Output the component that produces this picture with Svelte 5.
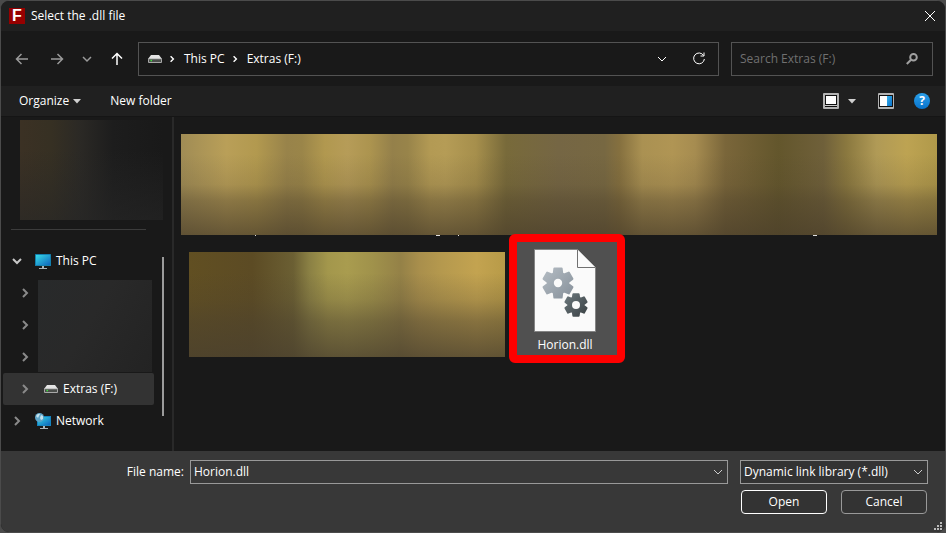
<script lang="ts">
	let fileName = $state('Horion.dll');
	let fileType = $state('dll');
	let query = $state('');

	const fileTypes = [{ value: 'dll', label: 'Dynamic link library (*.dll)' }];
	const crumbs = ['This PC', 'Extras (F:)'];
	const drives = ['Drive 1', 'Drive 2', 'Drive 3'];

	// outline of a six-toothed gear centred on 0,0
	function gear(outer: number, inner: number): string {
		const pts: string[] = [];
		for (let i = 0; i < 6; i++) {
			const a = i * 60 - 90;
			for (const [offset, r] of [[-24, inner], [-14, outer], [14, outer], [24, inner]]) {
				const t = ((a + offset) * Math.PI) / 180;
				pts.push(`${(r * Math.cos(t)).toFixed(2)},${(r * Math.sin(t)).toFixed(2)}`);
			}
		}
		return 'M' + pts.join('L') + 'Z';
	}
</script>

{#snippet drive()}
	<svg class="drive" width="14" height="8" viewBox="0 0 14 8" aria-hidden="true">
		<path d="M3 0h8l3 4H0z" fill="#e4e4e4" />
		<rect y="3.5" width="14" height="4.5" rx="1" fill="#a8a8a8" />
		<rect x="1" y="4.3" width="12" height="2.7" fill="#4a4d4a" />
		<rect x="2.5" y="4.8" width="1.5" height="1.5" fill="#3fe03f" />
	</svg>
{/snippet}

{#snippet chevron(dir: string)}
	<svg class="chevron {dir}" width="10" height="10" viewBox="0 0 10 10" aria-hidden="true">
		<path d="M3 1l4 4-4 4" />
	</svg>
{/snippet}

<div class="dialog" role="dialog" aria-labelledby="dialog-title">
	<header class="titlebar">
		<span class="logo" aria-hidden="true">F</span>
		<span id="dialog-title">Select the .dll file</span>
		<button class="close" aria-label="Close">
			<svg width="12" height="12" viewBox="0 0 12 12"><path d="M1 1l10 10M11 1L1 11" /></svg>
		</button>
	</header>

	<nav class="navbar">
		<div class="history">
			<button class="dim" aria-label="Back">
				<svg width="14" height="14" viewBox="0 0 14 14"><path d="M13 7H1.5M6.5 2l-5 5 5 5" /></svg>
			</button>
			<button class="dim" aria-label="Forward">
				<svg width="14" height="14" viewBox="0 0 14 14"><path d="M1 7h11.5M7.5 2l5 5-5 5" /></svg>
			</button>
			<button class="dim recent" aria-label="Recent locations">
				<svg width="10" height="10" viewBox="0 0 10 10"><path d="M1 3l4 4 4-4" /></svg>
			</button>
			<button aria-label="Up">
				<svg width="14" height="14" viewBox="0 0 14 14"><path d="M7 13V1.5M2 6.5l5-5 5 5" /></svg>
			</button>
		</div>
		<div class="address">
			{@render drive()}
			{#each crumbs as crumb}
				{@render chevron('crumb')}
				<a href="#top">{crumb}</a>
			{/each}
			<button class="drop" aria-label="Previous locations">
				<svg width="10" height="10" viewBox="0 0 10 10"><path d="M1 3l4 4 4-4" /></svg>
			</button>
			<button aria-label="Refresh">
				<svg width="14" height="14" viewBox="0 0 14 14"><path d="M11.6 3.5A5.4 5.4 0 1 0 12.4 7M12 .5v3.5H8.5" /></svg>
			</button>
		</div>
		<div class="search">
			<input type="text" placeholder="Search Extras (F:)" aria-label="Search Extras (F:)" bind:value={query} />
			<svg width="12" height="12" viewBox="0 0 12 12" aria-hidden="true"><circle cx="7.5" cy="4.3" r="3.3" /><path d="M5 6.8L.8 11" /></svg>
		</div>
	</nav>

	<div class="toolbar">
		<button class="organize">
			Organize
			<svg width="8" height="5" viewBox="0 0 8 5"><path d="M0 0h8L4 4.5z" /></svg>
		</button>
		<button>New folder</button>
		<div class="views">
			<button aria-label="Change view">
				<svg width="16" height="16" viewBox="0 0 16 16">
					<rect width="16" height="16" rx="1" fill="#b4b4b4" />
					<rect x="2" y="2" width="12" height="12" fill="#111" />
					<rect x="3" y="3" width="10" height="8" fill="#fff" />
					<rect x="2" y="12" width="12" height="1" fill="#ccc" />
				</svg>
			</button>
			<button class="more" aria-label="More views">
				<svg width="8" height="5" viewBox="0 0 8 5"><path d="M0 0h8L4 4.5z" /></svg>
			</button>
			<button class="preview" aria-label="Preview pane">
				<svg width="16" height="16" viewBox="0 0 16 16">
					<defs>
						<linearGradient id="pane" x1="0" y1="0" x2="1" y2="1">
							<stop offset="0" stop-color="#35b3ef" />
							<stop offset="1" stop-color="#0a6fc8" />
						</linearGradient>
					</defs>
					<rect width="16" height="16" rx="1" fill="#b4b4b4" />
					<rect x="1" y="2" width="14" height="12" fill="#111" />
					<rect x="2" y="3" width="7" height="10" fill="#fff" />
					<rect x="9" y="3" width="5" height="10" fill="url(#pane)" />
				</svg>
			</button>
			<button class="help" aria-label="Help">?</button>
		</div>
	</div>

	<main>
		<aside>
			<div class="tree">
				<div class="blur pinned"></div>
				<hr />
				<div class="node">
					<button aria-label="Collapse This PC">{@render chevron('down bright')}</button>
					<svg width="16" height="15" viewBox="0 0 16 15" aria-hidden="true">
						<defs>
							<linearGradient id="screen" x1="0" y1="0" x2="1" y2="1">
								<stop offset="0" stop-color="#37dbe6" />
								<stop offset="1" stop-color="#0f66be" />
							</linearGradient>
						</defs>
						<rect width="16" height="12" rx=".5" fill="#137fae" />
						<rect x="1" y="1" width="14" height="10" fill="url(#screen)" />
						<path d="M7 12h2v2h3v1H4v-1h3z" fill="#a9b4ba" />
					</svg>
					<span>This PC</span>
				</div>
				<div class="drives">
					<div class="expanders">
						{#each drives as name}
							<button aria-label="Expand {name}">{@render chevron('right')}</button>
						{/each}
					</div>
					<div class="blur names"></div>
				</div>
				<div class="node child selected">
					<button aria-label="Expand Extras">{@render chevron('right')}</button>
					{@render drive()}
					<span>Extras (F:)</span>
				</div>
				<div class="node">
					<button aria-label="Expand Network">{@render chevron('right')}</button>
					<svg width="16" height="16" viewBox="0 0 16 16" aria-hidden="true">
						<rect x="2" y="3" width="14" height="10" fill="#1583bf" />
						<rect x="3" y="4" width="12" height="8" fill="url(#screen)" />
						<path d="M8 13h2v2h3v1H5v-1h3z" fill="#a9b4ba" />
						<circle cx="4.5" cy="4.5" r="4.5" fill="#5fa5c8" />
						<path d="M1 3q2-3 4-2l-1 2-1 2zM6 2l2 1v3L6 7 5 5z" fill="#c4e2ee" />
					</svg>
					<span>Network</span>
				</div>
			</div>
			<div class="scrollbar"></div>
		</aside>

		<section class="files">
			<div class="blur row-one"></div>
			<svg class="descenders" height="1" viewBox="0 0 756 1" preserveAspectRatio="none" aria-hidden="true">
				<path d="M74 0h1v1h-1zM255 0h4v1h-4zM277 0h1v1h-1zM632 0h4v1h-4z" />
			</svg>
			<div class="row">
				<div class="blur row-two"></div>
				<button class="file">
					<svg width="62" height="84" viewBox="0 0 62 84" aria-hidden="true">
						<defs>
							<linearGradient id="gear-light" x1="0" y1="0" x2="1" y2="1">
								<stop offset="0" stop-color="#b4bcc3" />
								<stop offset="1" stop-color="#87919b" />
							</linearGradient>
							<linearGradient id="gear-dark" x1="0" y1="0" x2="1" y2="1">
								<stop offset="0" stop-color="#6b777c" />
								<stop offset="1" stop-color="#3b4245" />
							</linearGradient>
						</defs>
						<path d="M.5 .5h43l18 18v64H.5z" fill="#fafafa" stroke="#858585" />
						<path d="M43.5 .5v18h18" fill="#fafafa" stroke="#707070" />
						<g transform="translate(24 34)">
							<path d={gear(15, 10.5)} fill="url(#gear-light)" stroke="url(#gear-light)" stroke-width="2" stroke-linejoin="round" />
							<circle r="4.2" fill="#fafafa" />
						</g>
						<g transform="translate(42 56)">
							<path d={gear(11, 7.8)} fill="url(#gear-dark)" stroke="url(#gear-dark)" stroke-width="2" stroke-linejoin="round" />
							<circle r="4" fill="#fafafa" />
						</g>
					</svg>
					<span>Horion.dll</span>
				</button>
			</div>
		</section>
	</main>

	<footer>
		<div class="fields">
			<label for="file-name">File name:</label>
			<div class="combo">
				<input id="file-name" type="text" bind:value={fileName} />
				<button aria-label="Show recent names">{@render chevron('down')}</button>
			</div>
			<div class="type">
				<select aria-label="File type" bind:value={fileType}>
					{#each fileTypes as type}
						<option value={type.value}>{type.label}</option>
					{/each}
				</select>
				{@render chevron('down')}
			</div>
		</div>
		<div class="actions">
			<button class="open">Open</button>
			<button>Cancel</button>
		</div>
		<svg class="grip" width="10" height="10" viewBox="0 0 10 10" aria-hidden="true">
			<path d="M6 0h2v2H6zM3 3h2v2H3zM6 3h2v2H6zM0 6h2v2H0zM3 6h2v2H3zM6 6h2v2H6z" />
		</svg>
	</footer>
</div>

<style>
	:global(body) {
		margin: 0;
		background: #4b4b4b;
	}

	.dialog {
		display: flex;
		flex-direction: column;
		box-sizing: border-box;
		min-height: 100vh;
		border: 1px solid #4b4b4b;
		border-radius: 9px;
		overflow: hidden;
		background: #191919;
		color: #fff;
		font: 12px/16px 'Open Sans', 'Noto Sans', sans-serif;
	}

	button,
	input,
	select {
		padding: 0;
		border: 0;
		background: none;
		color: inherit;
		font: inherit;
	}

	input,
	select {
		outline: 0;
	}

	button {
		display: flex;
		align-items: center;
		justify-content: center;
	}

	svg {
		display: block;
		flex: none;
	}

	.titlebar {
		display: flex;
		align-items: center;
		height: 30px;
		padding-left: 8px;
		background: #202020;
	}

	.logo {
		width: 16px;
		height: 16px;
		margin-right: 6px;
		background: #960000;
		font: bold 16px/16px 'Liberation Sans', sans-serif;
		text-align: center;
	}

	.close {
		width: 30px;
		height: 30px;
		margin-left: auto;
	}

	.close svg,
	.history svg,
	.address button svg,
	.search svg {
		fill: none;
		stroke: #fff;
	}

	.navbar {
		display: flex;
		align-items: center;
		height: 55px;
		padding-right: 12px;
	}

	.history {
		display: flex;
		padding-left: 8px;
		width: 129px;
		box-sizing: border-box;
	}

	.history button {
		width: 26px;
		height: 26px;
		margin-right: 9px;
	}

	.history .recent {
		width: 16px;
	}

	.history button:last-child {
		margin: 0;
	}

	.history .dim svg {
		stroke: #9a9a9a;
	}

	.history svg {
		stroke-width: 1.5;
	}

	.address,
	.search {
		display: flex;
		align-items: center;
		box-sizing: border-box;
		height: 34px;
		border: 1px solid #535353;
	}

	.address {
		flex: 1;
		margin-left: 8px;
		padding: 0 9px;
	}

	.address a {
		color: inherit;
		text-decoration: none;
	}

	.address button {
		width: 20px;
		height: 24px;
	}

	.address .drop {
		margin: 0 17px 0 auto;
	}

	.chevron {
		fill: none;
		stroke: #8a8a8a;
		stroke-width: 2;
	}

	.crumb {
		margin: 0 7px 0 5px;
		stroke: #fff;
		transform: scale(0.7);
	}

	.down {
		transform: rotate(90deg);
	}

	.bright {
		stroke: #c8c8c8;
	}

	.search {
		width: 202px;
		margin-left: 12px;
		padding: 0 14px 0 8px;
	}

	.search input {
		flex: 1;
		min-width: 0;
	}

	.search input::placeholder {
		color: #707070;
		opacity: 1;
	}

	.search svg {
		stroke: #a0a0a0;
		stroke-width: 2;
	}

	.toolbar {
		display: flex;
		align-items: center;
		height: 30px;
		padding: 0 15px 0 18px;
		border-bottom: 1px solid #151515;
		background: #202020;
	}

	.toolbar path {
		fill: #d0d0d0;
	}

	.organize {
		gap: 4px;
		margin-right: 29px;
	}

	.views {
		display: flex;
		align-items: center;
		margin-left: auto;
	}

	.more {
		margin: 0 22px 0 9px;
	}

	.preview {
		margin-right: 20px;
	}

	.help {
		width: 16px;
		height: 16px;
		border-radius: 50%;
		background: linear-gradient(#2aa0ea, #0873cc);
		font-weight: bold;
	}

	main {
		display: flex;
		flex: 1;
	}

	aside {
		display: flex;
		box-sizing: border-box;
		width: 173px;
		padding-left: 2px;
		border-right: 2px solid #292929;
	}

	.tree {
		width: 151px;
	}

	.pinned {
		height: 100px;
		margin: 3px -9px 9px 17px;
		background:
			linear-gradient(transparent 30%, rgba(38, 38, 38, 0.6)),
			linear-gradient(90deg, #3b3124, #363023 22%, #2b2925 42%, #1d1d1d 65%, #191919);
	}

	hr {
		height: 1px;
		margin: 0 8px 15px;
		border: 0;
		background: #3c3c3c;
	}

	.node {
		display: flex;
		align-items: center;
		height: 32px;
		padding-left: 4px;
	}

	.node > button {
		width: 20px;
		height: 20px;
		margin-right: 8px;
	}

	.node span {
		margin-left: 5px;
	}

	.child {
		padding-left: 12px;
	}

	.child .drive {
		margin-left: 1px;
	}

	.selected {
		border-radius: 2px;
		background: #333;
	}

	.drives {
		display: flex;
	}

	.expanders {
		width: 35px;
	}

	.expanders button {
		width: 20px;
		height: 32px;
		margin-left: 12px;
	}

	.names {
		flex: 1;
		margin: 3px 2px 1px 0;
		background: linear-gradient(120deg, #282a2b, #292929 45%, #232323);
	}

	.scrollbar {
		width: 2px;
		height: 159px;
		margin: 140px 0 0 8px;
		background: #9b9b9b;
	}

	.files {
		flex: 1;
		padding: 17px 8px 0 7px;
	}

	.row-one {
		height: 101px;
		background:
			linear-gradient(rgba(74, 62, 42, 0) 20%, rgba(74, 62, 42, 0.15) 50%, rgba(74, 62, 42, 0.42) 66%, rgba(74, 62, 42, 0.75)),
			linear-gradient(90deg, #a08c55, #b99f58 6%, #b2994f 10%, #98834a 14%, #9a8549 16%, #b1984f 19%, #b69c58 22%, #ac944f 25%, #94804a 28%, #98844a 30%, #b39a54 33%, #b59c56 35%, #a68f4c 39%, #786a3a 43%, #756644 50%, #776842 56%, #85703f 58%, #aa9152 61%, #b09554 65%, #a68c50 68%, #7a663a 72%, #63562c 79%, #6f603a 85%, #8a783f 88%, #b09a56 92%, #bda352 96%, #b0994a);
	}

	.descenders {
		width: 100%;
		fill: #e0e0e0;
	}

	.row {
		display: flex;
		align-items: flex-start;
		padding: 5px 0 0 8px;
	}

	.row-two {
		width: 316px;
		height: 105px;
		margin: 11px 12px 0 0;
		background:
			linear-gradient(rgba(74, 64, 46, 0) 20%, rgba(74, 64, 46, 0.2) 45%, rgba(74, 64, 46, 0.5) 66%, rgba(74, 64, 46, 0.8)),
			linear-gradient(90deg, #614f22, #5c4b24 20%, #6b5f33 33%, #8a8044 38%, #a3974c 44%, #a99c4f 50%, #a0924b 58%, #948147 67%, #a98f4c 73%, #b5994e 80%, #c3a350 91%, #b89b48);
	}

	.file {
		position: relative;
		flex-direction: column;
		justify-content: flex-start;
		gap: 4px;
		box-sizing: border-box;
		width: 100px;
		height: 115px;
		padding: 8px 4px 0 0;
		border-bottom: 1px solid #999;
		background: #505050;
	}

	/* marks the file to pick */
	.file::after {
		content: '';
		position: absolute;
		inset: -7px -8px -8px;
		border: 8px solid #f00;
		border-radius: 6px;
	}

	footer {
		position: relative;
		height: 81px;
		box-sizing: border-box;
		padding: 9px 17px 0 0;
		background: #383838;
	}

	.fields {
		display: flex;
	}

	label {
		width: 183px;
		padding-top: 4px;
		text-align: right;
	}

	.combo,
	.type {
		display: flex;
		align-items: center;
		box-sizing: border-box;
		height: 24px;
		border: 1px solid #999;
		background: #383838;
	}

	.combo {
		flex: 1;
		margin: 0 12px 0 6px;
	}

	.combo input {
		flex: 1;
		min-width: 0;
		padding-left: 3px;
	}

	.combo button {
		width: 18px;
	}

	footer .chevron {
		stroke-width: 1;
		stroke: #ccc;
	}

	.type {
		position: relative;
		width: 188px;
		background: #333;
	}

	.type select {
		width: 100%;
		height: 22px;
		padding-left: 3px;
		appearance: none;
	}

	.type .chevron {
		position: absolute;
		right: 4px;
		pointer-events: none;
	}

	.actions {
		display: flex;
		justify-content: flex-end;
		gap: 14px;
		margin: 6px 1px 0 0;
	}

	.actions button {
		box-sizing: border-box;
		width: 86px;
		height: 24px;
		border: 1px solid #999;
		border-radius: 4px;
		background: #333;
	}

	.actions .open {
		border-color: #fff;
	}

	.grip {
		position: absolute;
		right: 1px;
		bottom: 0;
		fill: #bbb;
	}
</style>
